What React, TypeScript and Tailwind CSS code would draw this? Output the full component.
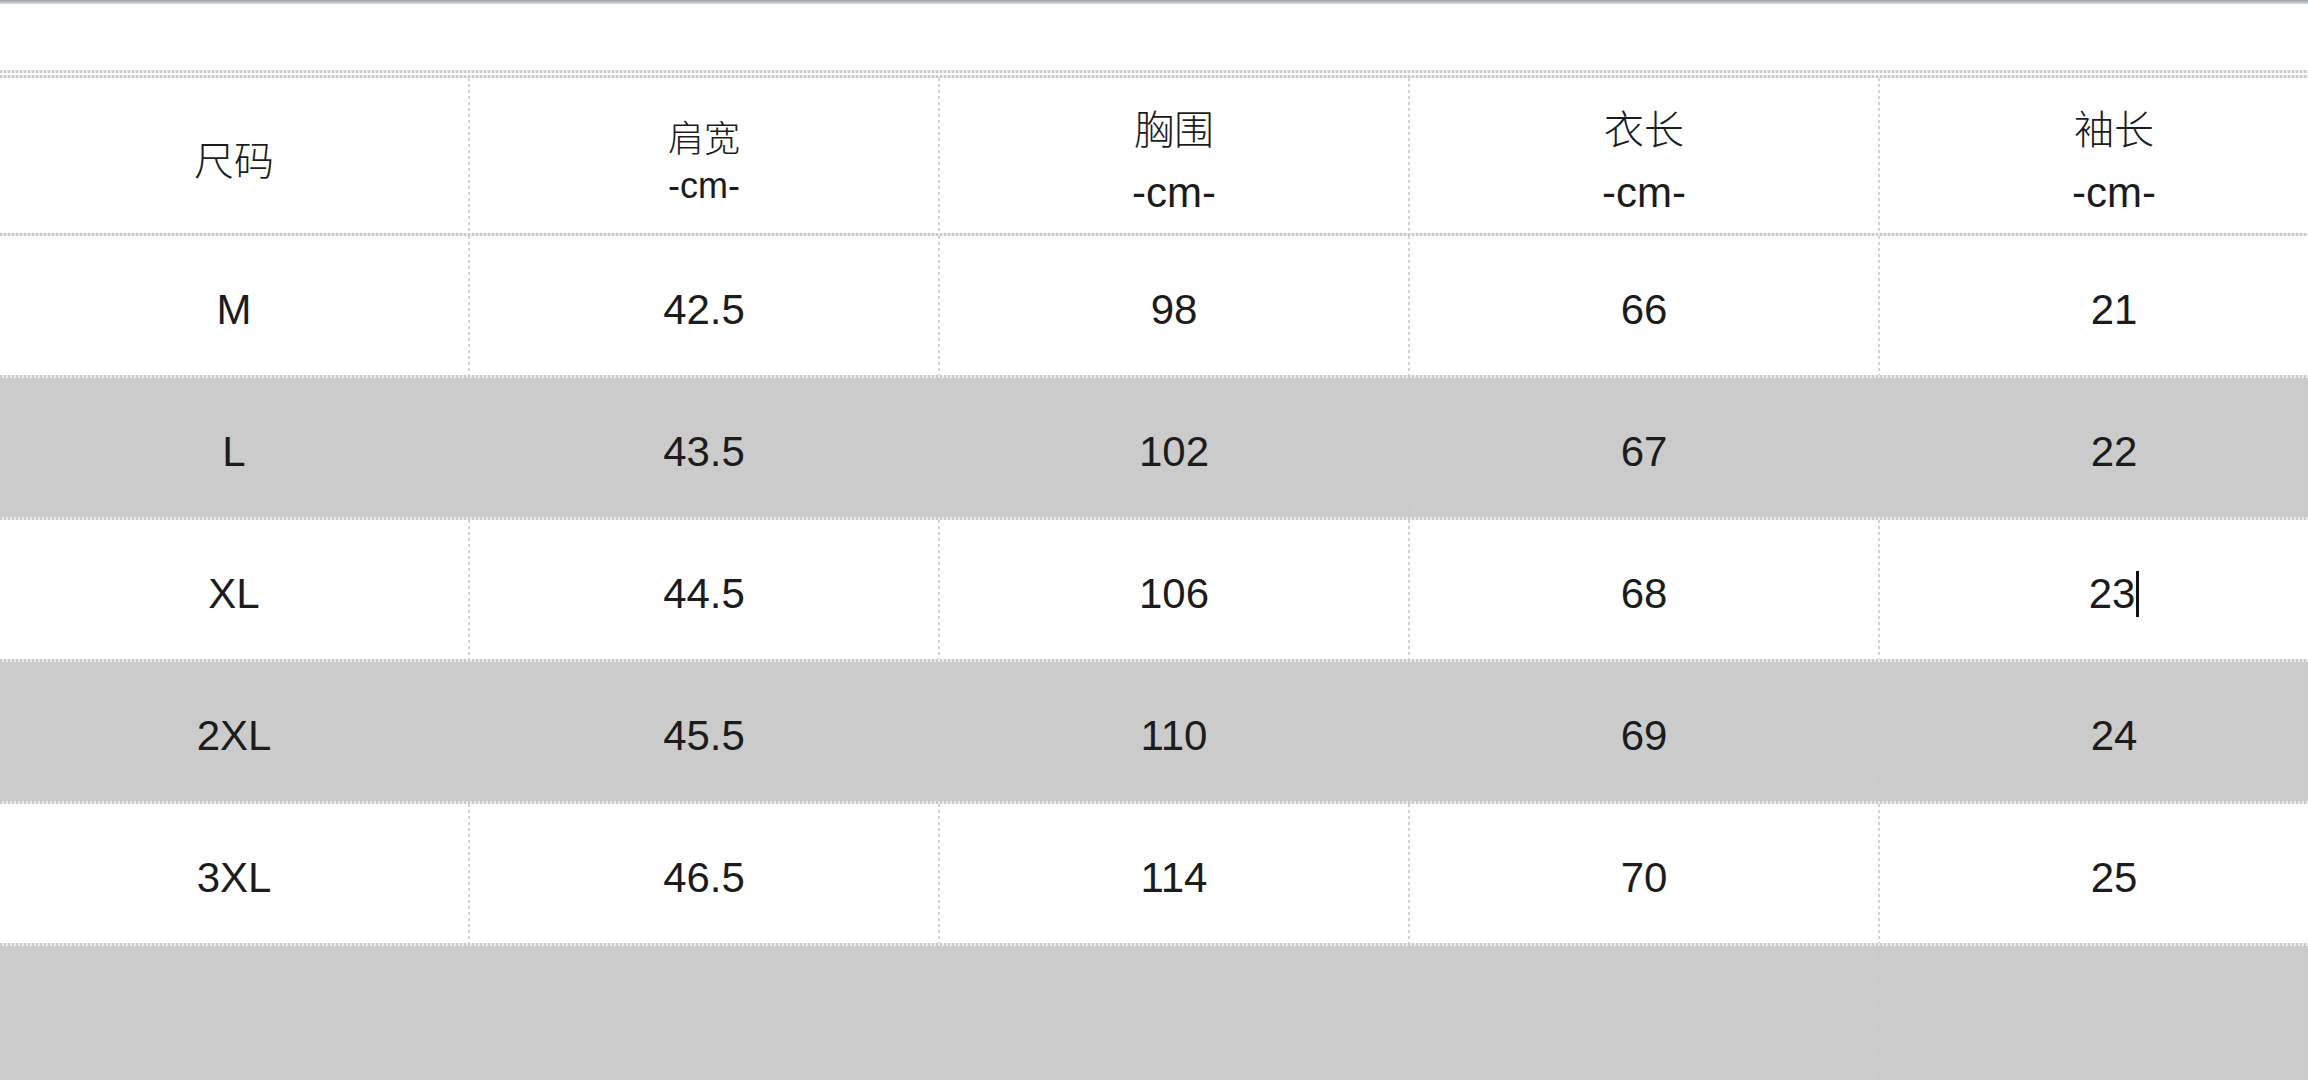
import React from "react";

const rows = [
  { size: "M", vals: ["42.5", "98", "66", "21"], shade: false },
  { size: "L", vals: ["43.5", "102", "67", "22"], shade: true },
  { size: "XL", vals: ["44.5", "106", "68", "23"], shade: false },
  { size: "2XL", vals: ["45.5", "110", "69", "24"], shade: true },
  { size: "3XL", vals: ["46.5", "114", "70", "25"], shade: false },
  { size: "", vals: ["", "", "", ""], shade: true },
];

const HLine = () => (
  <div className="h-[3px] w-full bg-[repeating-linear-gradient(90deg,#c9c9c9_0_2px,#ececec_2px_4px)]" />
);

const VLine = () => (
  <div className="w-[2px] self-stretch shrink-0 bg-[repeating-linear-gradient(180deg,#c8c8c8_0_3px,transparent_3px_6px)] opacity-80" />
);

const Cell = ({ children, pad = "" }: { children?: React.ReactNode; pad?: string }) => (
  <div className={`w-[468px] shrink-0 flex items-center justify-center text-[42px] text-[#1c1c1c] font-['Liberation_Sans','Noto_Sans_CJK_SC',sans-serif] ${pad}`}>
    {children}
  </div>
);

export default function App() {
  return (
    <div className="w-[2308px] h-[1080px] overflow-hidden bg-white">
      <div className="h-[4px] bg-gradient-to-b from-[#9aa0a8] to-[#d9dcdf]" />
      <div className="h-[66px]" />
      {/* top double border */}
      <div className="h-[8px] w-[2348px] flex flex-col justify-between">
        <HLine />
        <HLine />
      </div>

      <div className="w-[2348px]">
        {/* header */}
        <div className="flex h-[155px]">
          <Cell>
            <span className="pt-[4px] font-['Noto_Sans_CJK_SC',sans-serif] text-[40px] font-light">尺码</span>
          </Cell>
          <VLine />
          <Cell>
            <div className="flex flex-col items-center pt-[10px] leading-[50px]">
              <span className="font-['Noto_Sans_CJK_SC',sans-serif] text-[36px] font-light">肩宽</span>
              <span className="text-[36px]">-cm-</span>
            </div>
          </Cell>
          {["胸围", "衣长", "袖长"].map((h) => (
            <React.Fragment key={h}>
              <VLine />
              <Cell>
                <div className="flex flex-col items-center pt-[8px] leading-[65px]">
                  <span className="font-['Noto_Sans_CJK_SC',sans-serif] text-[40px] font-light">{h}</span>
                  <span className="text-[42px]">-cm-</span>
                </div>
              </Cell>
            </React.Fragment>
          ))}
        </div>

        {rows.map((r, i) => (
          <div key={i}>
            <HLine />
            <div className={`flex h-[139px] ${r.shade ? "bg-[#cbcbcb]" : "bg-white"}`}>
              <Cell pad="pt-[8px]">{r.size}</Cell>
              {r.vals.map((v, j) => (
                <React.Fragment key={j}>
                  <VLine />
                  <Cell pad="pt-[8px]">
                    {v}
                    {v === "23" && (
                      <span className="inline-block w-[3px] h-[46px] bg-[#111] ml-[1px]" />
                    )}
                  </Cell>
                </React.Fragment>
              ))}
            </div>
          </div>
        ))}
      </div>
    </div>
  );
}
